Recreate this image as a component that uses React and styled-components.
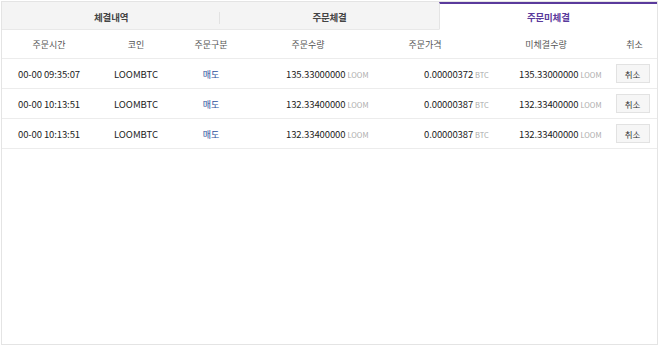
import React from 'react'
import styled, { createGlobalStyle } from 'styled-components'

const Global = createGlobalStyle`
  html, body {
    margin: 0;
    padding: 0;
    background: #fff;
  }
  body {
    font-family: "Noto Sans CJK KR", "Noto Sans", sans-serif;
    color: #333;
  }
`

const Panel = styled.div`
  box-sizing: border-box;
  margin: 1px;
  width: 657px;
  height: 344px;
  border: 1px solid #e4e4e4;
  background: #fff;
  display: flex;
  flex-direction: column;
`

const Tabs = styled.div`
  display: grid;
  grid-template-columns: repeat(3, 1fr);
  height: 28px;
`

const Tab = styled.div`
  position: relative;
  display: flex;
  align-items: center;
  justify-content: center;
  font-size: 9.5px;
  font-weight: 700;
  letter-spacing: -0.2px;
  box-sizing: border-box;
  background: ${p => (p.$active ? '#fff' : '#f4f4f4')};
  color: ${p => (p.$active ? '#5a3a9c' : '#444')};
  border-top: 2px solid ${p => (p.$active ? '#5a3a9c' : '#f4f4f4')};
  border-bottom: 1px solid ${p => (p.$active ? '#fff' : '#e8e8e8')};
  border-left: ${p => (p.$active ? '1px solid #e4e4e4' : '0')};
  ${p => p.$divider && `
    &::after {
      content: '';
      position: absolute;
      right: 0;
      top: 8px;
      height: 12px;
      width: 1px;
      background: #e2e2e2;
    }
  `}
`

const Row = styled.div`
  display: grid;
  grid-template-columns: 94px 80px 70px 124px 110px 132px 45px;
  height: ${p => (p.$head ? '28px' : '29px')};
  border-bottom: 1px solid #ececec;
  align-items: center;
  font-size: ${p => (p.$head ? '9px' : '9.5px')};
  color: ${p => (p.$head ? '#555' : '#222')};
`

const Cell = styled.div`
  white-space: nowrap;
  text-align: ${p => (p.$pad != null ? 'left' : 'center')};
  padding-left: ${p => (p.$pad != null ? p.$pad + 'px' : '0')};
  letter-spacing: ${p => (p.$num ? '-0.1px' : '0')};
`

const Sell = styled.span`
  color: #2d4f9c;
  font-size: 9px;
`

const Unit = styled.span`
  color: #aaa;
  font-size: 7.5px;
  margin-left: 2px;
  letter-spacing: 0;
`

const CancelButton = styled.button`
  box-sizing: border-box;
  width: 34px;
  height: 19px;
  margin-right: 4px;
  border: 1px solid #e2e2e2;
  background: #f6f6f6;
  font-family: inherit;
  font-size: 8.5px;
  color: #333;
  padding: 0;
  cursor: pointer;
`

const orders = [
  { time: '00-00 09:35:07', coin: 'LOOMBTC', qty: '135.33000000', price: '0.00000372', remain: '135.33000000' },
  { time: '00-00 10:13:51', coin: 'LOOMBTC', qty: '132.33400000', price: '0.00000387', remain: '132.33400000' },
  { time: '00-00 10:13:51', coin: 'LOOMBTC', qty: '132.33400000', price: '0.00000387', remain: '132.33400000' },
]

export default function App() {
  return (
    <>
      <Global />
      <Panel>
        <Tabs>
          <Tab $divider>체결내역</Tab>
          <Tab>주문체결</Tab>
          <Tab $active>주문미체결</Tab>
        </Tabs>
        <Row $head>
          <Cell>주문시간</Cell>
          <Cell>코인</Cell>
          <Cell>주문구분</Cell>
          <Cell>주문수량</Cell>
          <Cell>주문가격</Cell>
          <Cell>미체결수량</Cell>
          <Cell>취소</Cell>
        </Row>
        {orders.map((o, i) => (
          <Row key={i}>
            <Cell $num>{o.time}</Cell>
            <Cell>{o.coin}</Cell>
            <Cell><Sell>매도</Sell></Cell>
            <Cell $pad={40} $num>{o.qty}<Unit>LOOM</Unit></Cell>
            <Cell $pad={54} $num>{o.price}<Unit>BTC</Unit></Cell>
            <Cell $pad={39} $num>{o.remain}<Unit>LOOM</Unit></Cell>
            <Cell><CancelButton>취소</CancelButton></Cell>
          </Row>
        ))}
      </Panel>
    </>
  )
}
